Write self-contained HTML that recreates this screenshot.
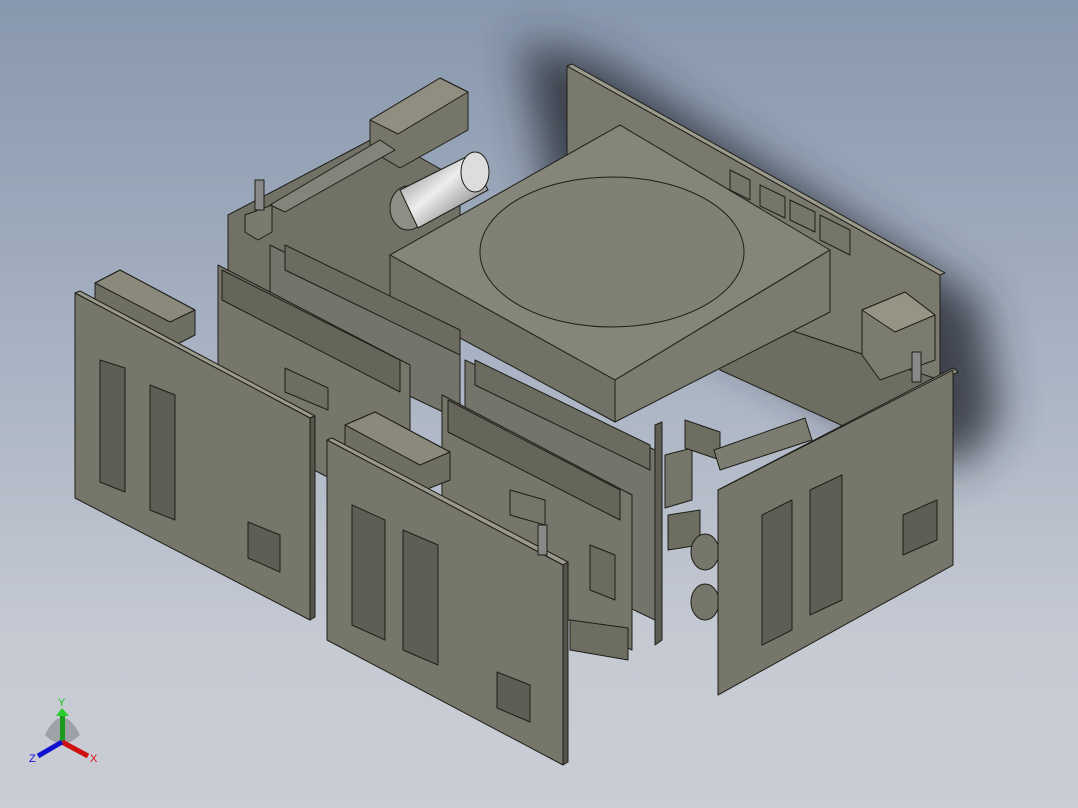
<!DOCTYPE html>
<html><head><meta charset="utf-8"><style>
html,body{margin:0;padding:0;width:1078px;height:808px;overflow:hidden}
body{background:linear-gradient(#8898ae 0%,#a9b3c3 45%,#c6cad3 80%,#cacdd5 100%)}
svg{position:absolute;left:0;top:0}
</style></head><body>
<svg width="1078" height="808" viewBox="0 0 1078 808" xmlns="http://www.w3.org/2000/svg">
<defs>
<filter id="b" x="-50%" y="-50%" width="200%" height="200%"><feGaussianBlur stdDeviation="22"/></filter>
<linearGradient id="cyl" x1="0" y1="0" x2="1" y2="1"><stop offset="0" stop-color="#777"/><stop offset=".45" stop-color="#eee"/><stop offset="1" stop-color="#555"/></linearGradient>
</defs>
<g stroke="#1e1e18" stroke-width="1" stroke-linejoin="round">
<polygon points="520,40 600,60 980,300 1000,420 960,470 860,420 560,250" fill="#2a2f38" stroke="none" filter="url(#b)" opacity=".85"/>
<polygon points="567,66 940,275 940,480 567,270" fill="#7a796d"/>
<polygon points="567,66 572,64 945,273 940,275" fill="#9a998c"/>
<polygon points="700,300 940,380 940,470 720,370" fill="#6e6d62"/>
<polygon points="228,215 380,135 460,180 460,360 228,330" fill="#727166"/>
<polygon points="370,120 440,78 468,92 468,130 400,168 370,150" fill="#76756a"/>
<polygon points="370,120 440,78 468,92 398,134" fill="#8f8e81"/>
<polygon points="270,205 380,140 395,150 285,212" fill="#85847a"/>
<ellipse cx="408" cy="208" rx="18" ry="22" fill="#8e8e86"/>
<polygon points="400,190 470,155 488,190 418,228" fill="url(#cyl)"/>
<ellipse cx="475" cy="172" rx="14" ry="20" fill="#ddd"/>
<polygon points="245,215 272,205 272,232 258,240 245,232" fill="#7a7a6e"/>
<rect x="255" y="180" width="9" height="30" fill="#888"/>
<polygon points="730,170 750,180 750,200 730,190" fill="#76756a"/>
<polygon points="760,185 785,197 785,218 760,206" fill="#76756a"/>
<polygon points="790,200 815,212 815,232 790,220" fill="#76756a"/>
<polygon points="820,215 850,230 850,255 820,240" fill="#76756a"/>
<polygon points="862,310 905,292 935,315 935,360 880,380 862,355" fill="#7c7b70"/>
<polygon points="862,310 905,292 935,315 895,332" fill="#959485"/>
<polygon points="390,255 620,125 830,250 615,380" fill="#868579"/>
<ellipse cx="612" cy="252" rx="132" ry="75" fill="#808074"/>
<polygon points="390,255 615,380 615,422 390,300" fill="#727166"/>
<polygon points="615,380 830,250 830,312 615,422" fill="#7c7b70"/>
<polygon points="270,245 460,340 460,420 270,330" fill="#75746a"/>
<polygon points="285,245 460,330 460,355 285,270" fill="#6c6b60"/>
<polygon points="218,265 410,365 410,520 218,420" fill="#77766a"/>
<polygon points="222,270 400,360 400,392 222,300" fill="#66655a"/>
<polygon points="465,360 655,450 655,620 465,530" fill="#75746a"/>
<polygon points="475,360 650,445 650,470 475,385" fill="#6c6b60"/>
<polygon points="442,395 632,495 632,650 442,560" fill="#77766a"/>
<polygon points="448,400 620,490 620,520 448,432" fill="#66655a"/>
<!-- middle gap components -->
<polygon points="655,425 662,422 662,640 655,645" fill="#5e5d53"/>
<polygon points="665,455 692,448 692,500 665,508" fill="#76756a"/>
<polygon points="668,515 700,510 700,545 668,550" fill="#6e6d62"/>
<ellipse cx="705" cy="552" rx="14" ry="18" fill="#77766a"/>
<ellipse cx="705" cy="602" rx="14" ry="18" fill="#77766a"/>
<polygon points="685,420 720,432 720,460 685,448" fill="#6e6d62"/>
<polygon points="714,450 805,418 812,440 720,470" fill="#7d7c70"/>
<polygon points="570,620 628,628 628,660 570,650" fill="#6e6d62"/>
<polygon points="510,490 545,500 545,525 510,515" fill="#76756a"/>
<polygon points="590,545 615,555 615,600 590,590" fill="#6c6b60"/>
<polygon points="95,283 120,270 195,310 195,335 170,348 95,308" fill="#6f6e63"/>
<polygon points="95,283 120,270 195,310 170,322" fill="#8a897c"/>
<polygon points="75,293 80,291 315,416 310,418" fill="#9a998c"/>
<polygon points="75,293 310,418 310,620 75,498" fill="#77766a"/>
<polygon points="310,418 315,416 315,617 310,620" fill="#55544a"/>
<polygon points="100,360 125,368 125,492 100,482" fill="#5f5e54"/>
<polygon points="150,385 175,395 175,520 150,510" fill="#5f5e54"/>
<polygon points="248,522 280,535 280,572 248,558" fill="#5f5e54"/>
<polygon points="285,368 328,388 328,410 285,392" fill="#6e6d62"/>
<polygon points="345,425 375,412 450,452 450,480 420,492 345,450" fill="#6f6e63"/>
<polygon points="345,425 375,412 450,452 420,465" fill="#8a897c"/>
<polygon points="327,440 332,438 568,562 563,565" fill="#9a998c"/>
<polygon points="327,440 563,565 563,765 327,640" fill="#77766a"/>
<polygon points="563,565 568,562 568,762 563,765" fill="#55544a"/>
<polygon points="352,505 385,520 385,640 352,625" fill="#5f5e54"/>
<polygon points="403,530 438,545 438,665 403,650" fill="#5f5e54"/>
<polygon points="497,672 530,685 530,722 497,708" fill="#5f5e54"/>
<rect x="538" y="525" width="9" height="30" fill="#888"/>
<polygon points="718,490 953,368 958,372 723,493" fill="#9a998c"/>
<polygon points="718,490 953,370 953,565 718,695" fill="#77766a"/>
<polygon points="762,515 792,500 792,630 762,645" fill="#5f5e54"/>
<polygon points="810,490 842,475 842,600 810,615" fill="#5f5e54"/>
<polygon points="903,515 937,500 937,540 903,555" fill="#5f5e54"/>
<rect x="912" y="352" width="9" height="30" fill="#888"/>
</g>
<g>
<path d="M45 735 Q62 700 80 735 Q62 752 45 735Z" fill="#8b8e94" opacity=".7"/>
<rect x="60" y="715" width="5" height="30" fill="#1a9a1a"/>
<polygon points="56,716 62,708 69,716" fill="#2ccc2c"/>
<line x1="62" y1="742" x2="88" y2="756" stroke="#d01010" stroke-width="5"/>
<line x1="62" y1="742" x2="38" y2="756" stroke="#1010d0" stroke-width="5"/>
<text x="58" y="706" font-family="Liberation Sans,sans-serif" font-size="11" fill="#20c020">Y</text>
<text x="90" y="762" font-family="Liberation Sans,sans-serif" font-size="11" fill="#e01010">X</text>
<text x="29" y="762" font-family="Liberation Sans,sans-serif" font-size="11" fill="#1010e0">Z</text>
</g>
</svg>
</body></html>
